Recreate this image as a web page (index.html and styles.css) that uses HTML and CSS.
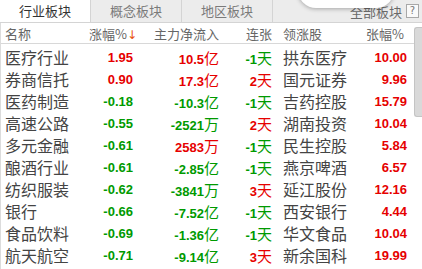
FILE: index.html
```html
<!DOCTYPE html>
<html lang="zh">
<head>
<meta charset="utf-8">
<link rel="stylesheet" href="styles.css">
</head>
<body>
<div class="panel">
  <div class="tabs">
    <div class="tab active">行业板块</div>
    <div class="tab">概念板块</div>
    <div class="tab">地区板块</div>
    <div class="tab-rest">
      <span class="all">全部板块</span>
      <span class="help">?</span>
    </div>
  </div>
  <div class="popup"></div>
  <div class="table">
    <div class="row head">
      <div class="c name">名称</div>
      <div class="c num hchg">涨幅%<span class="arrow">↓</span></div>
      <div class="c num">主力净流入</div>
      <div class="c num">连张</div>
      <div class="c lead">领涨股</div>
      <div class="c num hlast">张幅%</div>
    </div>
    <div class="body">
      <div class="row"><div class="c name">医疗行业</div><div class="c num red">1.95</div><div class="c num red">10.5<span class="u">亿</span></div><div class="c num green">-1<span class="u">天</span></div><div class="c lead">拱东医疗</div><div class="c num red">10.00</div></div>
      <div class="row"><div class="c name">券商信托</div><div class="c num red">0.90</div><div class="c num red">17.3<span class="u">亿</span></div><div class="c num red">2<span class="u">天</span></div><div class="c lead">国元证券</div><div class="c num red">9.96</div></div>
      <div class="row"><div class="c name">医药制造</div><div class="c num green">-0.18</div><div class="c num green">-10.3<span class="u">亿</span></div><div class="c num green">-1<span class="u">天</span></div><div class="c lead">吉药控股</div><div class="c num red">15.79</div></div>
      <div class="row"><div class="c name">高速公路</div><div class="c num green">-0.55</div><div class="c num green">-2521<span class="u">万</span></div><div class="c num red">2<span class="u">天</span></div><div class="c lead">湖南投资</div><div class="c num red">10.04</div></div>
      <div class="row"><div class="c name">多元金融</div><div class="c num green">-0.61</div><div class="c num red">2583<span class="u">万</span></div><div class="c num green">-1<span class="u">天</span></div><div class="c lead">民生控股</div><div class="c num red">5.84</div></div>
      <div class="row"><div class="c name">酿酒行业</div><div class="c num green">-0.61</div><div class="c num green">-2.85<span class="u">亿</span></div><div class="c num green">-1<span class="u">天</span></div><div class="c lead">燕京啤酒</div><div class="c num red">6.57</div></div>
      <div class="row"><div class="c name">纺织服装</div><div class="c num green">-0.62</div><div class="c num green">-3841<span class="u">万</span></div><div class="c num red">3<span class="u">天</span></div><div class="c lead">延江股份</div><div class="c num red">12.16</div></div>
      <div class="row"><div class="c name">银行</div><div class="c num green">-0.66</div><div class="c num green">-7.52<span class="u">亿</span></div><div class="c num green">-1<span class="u">天</span></div><div class="c lead">西安银行</div><div class="c num red">4.44</div></div>
      <div class="row"><div class="c name">食品饮料</div><div class="c num green">-0.69</div><div class="c num green">-1.36<span class="u">亿</span></div><div class="c num green">-1<span class="u">天</span></div><div class="c lead">华文食品</div><div class="c num red">10.04</div></div>
      <div class="row"><div class="c name">航天航空</div><div class="c num green">-0.71</div><div class="c num green">-9.14<span class="u">亿</span></div><div class="c num red">3<span class="u">天</span></div><div class="c lead">新余国科</div><div class="c num red">19.99</div></div>
    </div>
    <div class="scroll"></div>
  </div>
</div>
</body>
</html>
```

FILE: styles.css
```css
* { box-sizing: border-box; }
html, body { margin: 0; padding: 0; background: #fff; }
body {
  width: 422px;
  height: 269px;
  overflow: hidden;
  font-family: "Noto Sans CJK SC", "Noto Sans", sans-serif;
}
.panel { position: relative; width: 422px; height: 269px; }
.tabs {
  display: flex;
  height: 23px;
  background: #ececec;
  border-bottom: 1px solid #d4d4d4;
}
.tab {
  width: 91px;
  height: 22px;
  line-height: 22px;
  text-align: center;
  font-size: 13px;
  color: #7a7a7a;
  border-right: 1px solid #d4d4d4;
}
.tab.active { background: #fff; color: #333; }
.tab-rest {
  flex: 1;
  display: flex;
  align-items: center;
  justify-content: flex-end;
  padding-right: 3px;
  height: 22px;
}
.all { font-size: 13px; color: #6a6a6a; margin-right: 4px; }
.help {
  width: 13px;
  height: 14px;
  border: 1px solid #a8a8a8;
  background: #fafafa;
  font-family: "DejaVu Sans", sans-serif;
  font-size: 10px;
  line-height: 12px;
  text-align: center;
  color: #777;
}
.popup {
  position: absolute;
  left: 298px;
  top: -30px;
  width: 96px;
  height: 38px;
  background: #fff;
  border-radius: 18px;
  box-shadow: 0 1px 4px rgba(0,0,0,0.3);
}
.table {
  position: relative;
  border-left: 1px solid #dcdcdc;
  height: 246px;
}
.row {
  display: grid;
  grid-template-columns: 84px 44px 86px 53px 87px 48px;
  padding-left: 4px;
  height: 22px;
  align-items: center;
}
.row.head {
  height: 21px;
  border-bottom: 1px solid #d8d8d8;
  font-size: 13px;
  color: #666;
}
.body { padding-top: 1px; }
.c { white-space: nowrap; }
.num { text-align: right; }
.head .num { font-family: "Noto Sans CJK SC", sans-serif; font-weight: normal; }
.hchg { padding-right: 4px; }
.hlast { padding-right: 3px; }
.arrow { color: #e8500a; font-family: "DejaVu Sans", sans-serif; font-size: 12px; }
.body .name, .body .lead { font-size: 16px; color: #444; }
.lead { padding-left: 11px; }
.body .num {
  font-family: "Liberation Sans", Arial, sans-serif;
  font-weight: bold;
  font-size: 13px;
}
.u {
  font-family: "Noto Sans CJK SC", sans-serif;
  font-weight: normal;
  font-size: 15px;
}
.red { color: #e60000; }
.green { color: #009a00; }
.scroll {
  position: absolute;
  right: 0;
  top: 4px;
  width: 8px;
  height: 90px;
  background: #d9d9d9;
  border: 1px solid #c4c4c4;
  border-right: none;
  border-radius: 3px 0 0 3px;
}
```
